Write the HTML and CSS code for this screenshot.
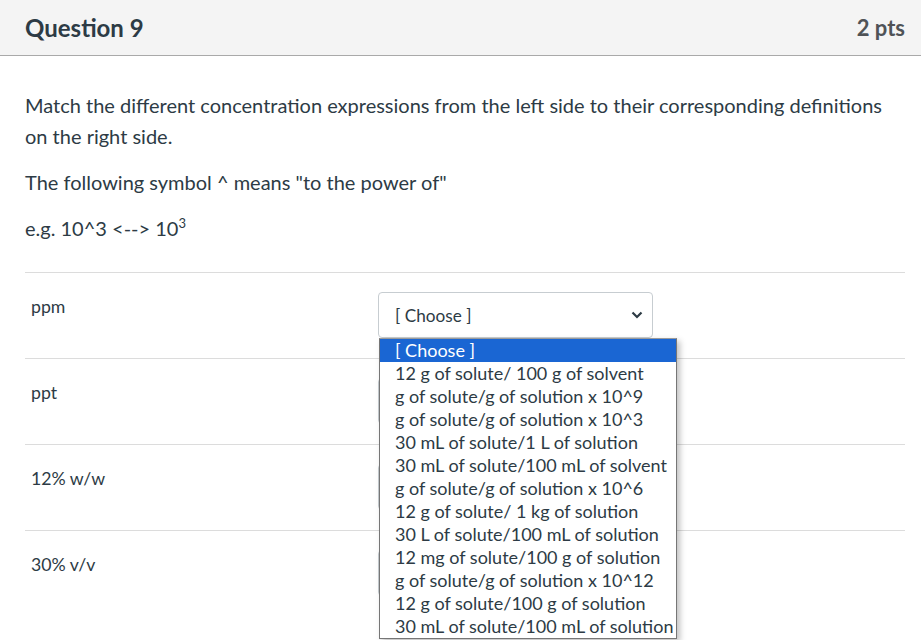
FILE: index.html
```html
<!DOCTYPE html>
<html>
<head>
<meta charset="utf-8">
<link rel="stylesheet" href="styles.css">
</head>
<body>
<div class="question">
  <div class="q-header">
    <h2 class="q-title">Question 9</h2>
    <div class="q-pts">2 pts</div>
  </div>
  <div class="q-body">
    <p class="q-text">Match the different concentration expressions from the left side to their corresponding definitions on the right side.</p>
    <p class="q-text">The following symbol ^ means "to the power of"</p>
    <p class="q-text">e.g. 10^3 &lt;--&gt; 10<sup>3</sup></p>
    <div class="matches">
      <div class="match-row">
        <div class="match-label">ppm</div>
        <div class="select-wrap">
          <div class="select"><span>[ Choose ]</span>
            <svg class="chev" width="12" height="8" viewBox="0 0 12 8"><path d="M1.5 1.5 L6 6 L10.5 1.5" fill="none" stroke="#2d3b45" stroke-width="2.2"/></svg>
          </div>
          <ul class="popup">
            <li class="sel">[ Choose ]</li>
            <li>12 g of solute/ 100 g of solvent</li>
            <li>g of solute/g of solution x 10^9</li>
            <li>g of solute/g of solution x 10^3</li>
            <li>30 mL of solute/1 L of solution</li>
            <li>30 mL of solute/100 mL of solvent</li>
            <li>g of solute/g of solution x 10^6</li>
            <li>12 g of solute/ 1 kg of solution</li>
            <li>30 L of solute/100 mL of solution</li>
            <li>12 mg of solute/100 g of solution</li>
            <li>g of solute/g of solution x 10^12</li>
            <li>12 g of solute/100 g of solution</li>
            <li>30 mL of solute/100 mL of solution</li>
          </ul>
        </div>
      </div>
      <div class="match-row">
        <div class="match-label">ppt</div>
        <div class="select-wrap"><div class="select"><span>[ Choose ]</span></div></div>
      </div>
      <div class="match-row">
        <div class="match-label">12% w/w</div>
        <div class="select-wrap"><div class="select"><span>[ Choose ]</span></div></div>
      </div>
      <div class="match-row">
        <div class="match-label">30% v/v</div>
        <div class="select-wrap"><div class="select"><span>[ Choose ]</span></div></div>
      </div>
    </div>
  </div>
</div>
</body>
</html>
```
FILE: styles.css
```css
html, body {
  margin: 0;
  padding: 0;
  background: #fff;
  font-family: Lato, "Open Sans", sans-serif;
  color: #2d3b45;
}
.question {
  min-height: 640px;
}
.q-header {
  display: flex;
  align-items: center;
  justify-content: space-between;
  height: 55px;
  padding: 0 16px 0 25px;
  background: #f4f4f4;
  border-bottom: 1px solid #a9a9a9;
}
.q-title {
  margin: 0;
  font-size: 24px;
  font-weight: 700;
  color: #2d3b45;
}
.q-pts {
  font-size: 22px;
  font-weight: 700;
  color: #4f5357;
}
.q-body {
  padding: 34px 16px 0 25px;
}
.q-text {
  margin: 0 0 15px 0;
  font-size: 20px;
  line-height: 31px;
}
.q-text sup {
  font-size: 13px;
  line-height: 0;
  vertical-align: 8px;
}
.matches {
  margin-top: 28px;
}
.match-row {
  display: flex;
  align-items: flex-start;
  height: 86px;
  box-sizing: border-box;
  padding-top: 19px;
  border-top: 1px solid #dcdcdc;
}
.match-label {
  width: 347px;
  padding: 4px 0 0 6px;
  font-size: 17.7px;
  line-height: 22px;
}
.select-wrap {
  position: relative;
}
.select {
  display: flex;
  align-items: center;
  justify-content: space-between;
  box-sizing: border-box;
  width: 275px;
  height: 46px;
  padding: 0 8px 0 16px;
  border: 1px solid #c7cdd1;
  border-radius: 4px;
  background: #fff;
  font-size: 17.2px;
}
.chev {
  display: block;
  margin-right: 1px;
}
.popup {
  position: absolute;
  top: 46px;
  left: 1px;
  z-index: 10;
  width: 298px;
  margin: 0;
  padding: 0;
  list-style: none;
  background: #fff;
  border: 1px solid #767676;
  border-top-color: #9a9a9a;
  box-sizing: border-box;
  box-shadow: 3px 3px 6px rgba(0,0,0,0.25);
}
.popup li {
  height: 23px;
  line-height: 23px;
  padding-left: 15px;
  font-size: 18px;
  color: #2d3b45;
  white-space: nowrap;
}
.popup li.sel {
  background: #1a66d3;
  color: #fff;
}
```
